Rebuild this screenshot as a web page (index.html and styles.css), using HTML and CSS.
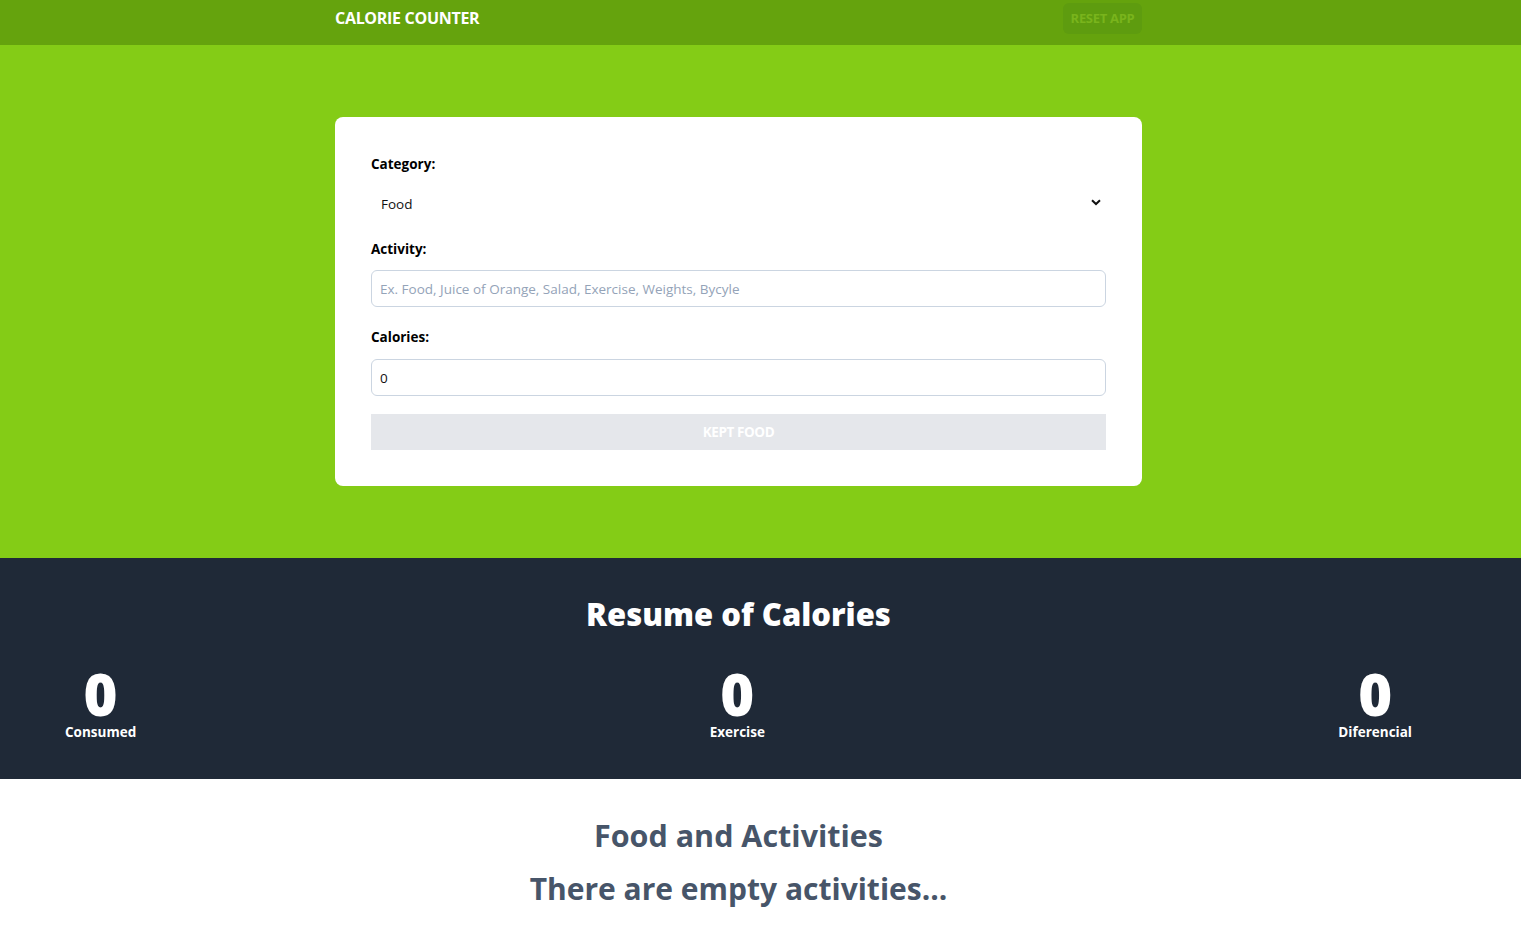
FILE: index.html
```html
<!DOCTYPE html>
<html lang="en">
<head>
<meta charset="utf-8">
<title>Calorie Counter</title>
<link rel="stylesheet" href="styles.css">
</head>
<body>
<header class="topbar">
  <div class="container topbar-inner">
    <h1 class="brand">CALORIE COUNTER</h1>
    <button class="reset" disabled>RESET APP</button>
  </div>
</header>

<section class="hero">
  <div class="container">
    <form class="card">
      <div class="field field-select">
        <label class="label" for="category">Category:</label>
        <div class="select-wrap">
          <select id="category" class="select">
            <option>Food</option>
            <option>Exercise</option>
          </select>
          <svg class="chev" width="10" height="7" viewBox="0 0 10 7"><path d="M1 1.2 L5 5 L9 1.2" fill="none" stroke="#111" stroke-width="2"/></svg>
        </div>
      </div>
      <div class="field">
        <label class="label" for="activity">Activity:</label>
        <input id="activity" class="input" type="text" placeholder="Ex. Food, Juice of Orange, Salad, Exercise, Weights, Bycyle">
      </div>
      <div class="field field-last">
        <label class="label label-cal" for="calories">Calories:</label>
        <input id="calories" class="input" type="number" value="0">
      </div>
      <button class="submit" type="button" disabled>KEPT FOOD</button>
    </form>
  </div>
</section>

<section class="summary">
  <div class="frame">
    <h2 class="summary-title">Resume of Calories</h2>
    <div class="stats">
      <div class="stat"><span class="stat-num">0</span><span class="stat-label">Consumed</span></div>
      <div class="stat"><span class="stat-num">0</span><span class="stat-label">Exercise</span></div>
      <div class="stat"><span class="stat-num">0</span><span class="stat-label">Diferencial</span></div>
    </div>
  </div>
</section>

<section class="activities">
  <div class="frame">
    <h2 class="act-title">Food and Activities</h2>
    <p class="empty">There are empty activities...</p>
  </div>
</section>
</body>
</html>
```

FILE: styles.css
```css
* { box-sizing: border-box; }
html, body { margin: 0; padding: 0; }
body {
  font-family: "Open Sans", "Noto Sans", "Liberation Sans", sans-serif;
  background: #ffffff;
  color: #111;
}
.frame { padding-right: 44px; }
.container {
  width: 807px;
  margin-left: 335px;
}
.topbar { background: #65a30d; height: 45px; }
.topbar-inner {
  display: flex;
  justify-content: space-between;
  align-items: center;
  height: 45px;
  padding-bottom: 9px;
}
.brand {
  margin: 0;
  font-size: 16px;
  font-weight: 700;
  color: #fff;
  letter-spacing: -0.3px;
}
.reset {
  font-family: inherit;
  font-size: 13px;
  font-weight: 700;
  letter-spacing: -0.3px;
  color: #79b41c;
  background: #5e9c0f;
  border: 0;
  border-radius: 6px;
  height: 31px;
  width: 79px;
  padding: 0;
}
.hero { background: #84cc16; padding: 72px 0; }
.card {
  background: #fff;
  border-radius: 8px;
  padding: 37px 36px 36px;
  display: flex;
  flex-direction: column;
}
.field { display: flex; flex-direction: column; margin-bottom: 20px; }
.field-select { margin-bottom: 17px; }
.field-last { margin-bottom: 18px; }
.label {
  font-size: 13.5px;
  font-weight: 700;
  line-height: 20px;
  margin-bottom: 11px;
  color: #000;
}
.label-cal { margin-bottom: 12px; }
.select-wrap { position: relative; }
.select {
  appearance: none;
  -webkit-appearance: none;
  width: 100%;
  height: 37px;
  border: 0;
  background: #fff;
  font-family: inherit;
  font-size: 13.5px;
  color: #111;
  padding: 0 10px;
}
.chev { position: absolute; right: 5px; top: 14px; }
.input {
  width: 100%;
  height: 37px;
  border: 1px solid #cbd5e1;
  border-radius: 6px;
  padding: 0 8px;
  font-family: inherit;
  font-size: 13.5px;
  color: #111;
  background: #fff;
}
.input::placeholder { color: #94a3b8; }
.input[type=number]::-webkit-inner-spin-button { -webkit-appearance: none; }
.submit {
  height: 36px;
  border: 0;
  background: #e5e7eb;
  color: #fff;
  font-family: inherit;
  font-weight: 700;
  font-size: 13.5px;
  letter-spacing: -0.4px;
}
.summary { background: #1f2937; height: 221px; padding-top: 34px; }
.summary-title {
  margin: 0;
  text-align: center;
  color: #fff;
  font-size: 31px;
  font-weight: 800;
  line-height: 44px;
}
.stats {
  display: flex;
  justify-content: space-between;
  padding: 0 65px;
  margin-top: 33px;
}
.stat { display: flex; flex-direction: column; align-items: center; color: #fff; }
.stat-num { font-size: 58px; font-weight: 800; line-height: 50px; }
.stat-label { font-size: 13.5px; font-weight: 700; line-height: 20px; margin-top: 3px; }
.activities { padding-top: 36px; text-align: center; color: #475569; }
.act-title { margin: 0; font-size: 30.5px; font-weight: 700; line-height: 40px; }
.empty { margin: 14px 0 0; font-size: 30px; font-weight: 700; line-height: 40px; }
```
